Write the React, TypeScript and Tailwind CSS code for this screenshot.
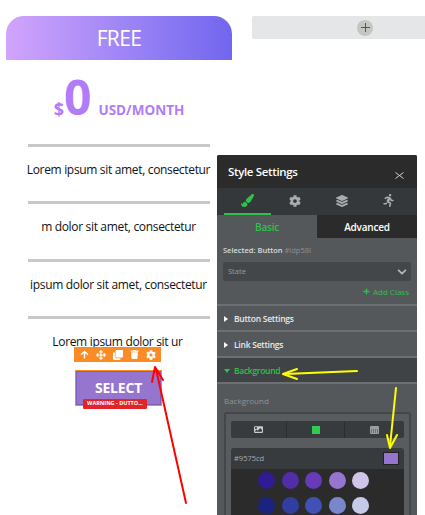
import { FaArrowUp, FaArrowsAlt, FaClone, FaTrash, FaCog, FaPaintBrush, FaLayerGroup, FaRunning, FaImage, FaPlus, FaChevronDown } from "react-icons/fa";

const sans = "font-['Open_Sans','Liberation_Sans',sans-serif]";

function Feature({ text }: { text: string }) {
  return (
    <div className="flex h-[57.4px] flex-col items-center">
      <div className="h-[3px] w-[182px] bg-[#c8c8c8]" />
      <div className="mt-[14px] w-[210px] whitespace-nowrap pr-[1px] text-center text-[12px] leading-[18px] tracking-[-0.33px] text-[#111]">{text}</div>
    </div>
  );
}

function Row({ label }: { label: string }) {
  return (
    <div className="flex h-[26px] items-center gap-[6px] border-b-2 border-[#6c7073] pl-[7px] pt-[2px] text-[8.5px] font-semibold tracking-[-0.25px] text-[#e8eaea]">
      <span className="h-0 w-0 border-y-[3px] border-l-[4px] border-y-transparent border-l-white" />
      {label}
    </div>
  );
}

const palette = [
  ["#311b92", "#512da8", "#673ab7", "#9575cd", "#d1c4e9"],
  ["#1a237e", "#303f9f", "#3f51b5", "#7986cb", "#c5cae9"],
];

export default function App() {
  return (
    <div className={`relative h-[515px] w-[425px] overflow-hidden bg-white ${sans}`}>
      <div className="flex items-start pt-[16px]">
        {/* Pricing column */}
        <div className="ml-[6px] w-[226px] shrink-0">
          <div className="flex h-[44px] items-center justify-center rounded-t-[18px] bg-gradient-to-r from-[#d2a4fc] to-[#7166ee] pt-[1px] text-[21px] tracking-[-0.6px] text-white">
            FREE
          </div>
          <div className="flex h-[84px] items-end justify-center pb-[24px] font-bold text-[#b07cf8]">
            <span className="text-[18px] leading-[22px]">$</span>
            <span className="mb-[-2px] text-[48px] leading-[50px]">0</span>
            <span className="ml-[7px] text-[13.5px] leading-[20px]">USD/MONTH</span>
          </div>
          <Feature text="Lorem ipsum sit amet, consectetur" />
          <Feature text="m dolor sit amet, consectetur" />
          <Feature text="ipsum dolor sit amet, consectetur" />
          <div className="flex flex-col items-center">
            <div className="h-[3px] w-[182px] bg-[#c8c8c8]" />
            <div className="mt-[14px] whitespace-nowrap pr-[3px] text-center text-[12px] leading-[18px] tracking-[-0.33px] text-[#111]">Lorem ipsum dolor sit ur</div>
            <div className="ml-[-3px] mt-[-4px] flex h-[15px] w-[87px] items-center justify-around bg-[#fb8b24] px-[2px] text-white">
              <FaArrowUp size={9} />
              <FaArrowsAlt size={10} />
              <FaClone size={10} />
              <FaTrash size={9} />
              <FaCog size={10} />
            </div>
            <div className="relative ml-[-1px] mt-[8px] flex h-[36px] w-[87px] justify-center border border-[#fb8b24] bg-[#9575cd] pt-[7px] text-[14px] font-bold leading-[20px] tracking-[-0.2px] text-white shadow-[inset_0_0_0_1px_#7e60b8]">
              SELECT
              <div className="absolute left-[7px] top-[28px] flex h-[10px] w-[64px] items-center justify-center rounded-[1px] bg-[#e02427] text-[5.5px] font-bold leading-none tracking-normal">
                WARNING - DUTTO...
              </div>
            </div>
          </div>
        </div>
        {/* Add row bar */}
        <div className="ml-[20px] flex h-[23px] w-[226px] shrink-0 items-center justify-center rounded-l-[2px] bg-[#e4e6e8]">
          <div className="flex h-[16px] w-[16px] items-center justify-center rounded-full bg-[#c4c6c2] text-[#50605c]">
            <svg width="9" height="9" viewBox="0 0 9 9" stroke="#4a5a56" strokeWidth="1"><path d="M4.5 0v9M0 4.5h9" /></svg>
          </div>
        </div>
      </div>

      {/* Floating style panel */}
      <div className="absolute left-[217px] top-[155px] h-[360px] w-[200px] overflow-hidden rounded-t-[2px] bg-[#54585b] text-white">
        <div className="flex h-[33px] items-center justify-between bg-[#2b2b2b] pl-[11px] pr-[13px] text-[11.5px] font-semibold tracking-[-0.35px]">
          <span>Style Settings</span>
          <svg width="9" height="7" viewBox="0 0 9 7" className="mt-[7px]" stroke="#cfcfcf" strokeWidth="1" fill="none"><path d="M.5.5l8 6M8.5.5l-8 6" /></svg>
        </div>
        <div className="flex h-[27px] bg-[#35383b] pl-[7px] text-[#a6acb0]">
          <div className="flex h-[27px] w-[47px] items-center justify-center border-b-2 border-[#2fc14a] text-[#2fc14a]">
            <FaPaintBrush size={13} />
          </div>
          <div className="flex h-[27px] w-[47px] items-center justify-center pb-[2px]"><FaCog size={12} /></div>
          <div className="flex h-[27px] w-[47px] items-center justify-center pb-[2px]"><FaLayerGroup size={12} /></div>
          <div className="flex h-[27px] w-[47px] items-center justify-center pb-[2px]"><FaRunning size={13} /></div>
        </div>
        <div className="flex h-[23px] text-[10px] font-semibold tracking-[-0.2px]">
          <div className="flex w-[100px] items-center justify-center pt-[1px] text-[#2fc14a]">Basic</div>
          <div className="flex flex-1 items-center justify-center bg-[#2b2b2b] pt-[1px]">Advanced</div>
        </div>
        <div className="flex h-[24px] items-center pl-[6px] pt-[1px] text-[7.5px] font-semibold text-[#d8dadb]">
          Selected: Button&nbsp;<span className="font-normal text-[#8c9093]">#idp58I</span>
        </div>
        <div className="mx-[6px] flex h-[19px] items-center justify-between rounded-[2px] bg-[#43474a] pl-[5px] pr-[4px] text-[7.5px] text-[#989c9e]">
          State
          <FaChevronDown size={10} className="text-[#b9bcbd]" />
        </div>
        <div className="flex h-[25px] items-center justify-end gap-[3px] border-b-2 border-[#6c7073] pb-[2px] pr-[8px] text-[8px] text-[#2fc14a]">
          <FaPlus size={7} />
          Add Class
        </div>
        <Row label="Button Settings" />
        <Row label="Link Settings" />
        <div className="flex h-[26px] items-center gap-[4px] border-b-2 border-[#6c7073] bg-[#404346] pl-[7px] pt-[2px] text-[8.5px] font-semibold tracking-[-0.3px] text-[#2fc14a]">
          <span className="h-0 w-0 border-x-[3px] border-t-[4px] border-x-transparent border-t-[#2fc14a]" />
          Background
        </div>
        <div className="flex h-[28px] items-center pl-[7px] pt-[6px] text-[8px] text-[#8f9395]">Background</div>
        <div className="ml-[7px] mr-[6px] h-[120px] rounded-[2px] border-2 border-[#43474a] bg-[#585c5f] px-[5px] pt-[7px]">
          <div className="flex h-[17px] overflow-hidden rounded-[2px] bg-[#373b3e]">
            <div className="flex w-[56px] items-center justify-center border-r border-[#2b2e30] text-[#c9cbcc]">
              <FaImage size={9} />
            </div>
            <div className="flex w-[58px] items-center justify-center border-r border-[#2b2e30]">
              <div className="h-[8px] w-[8px] bg-[#2ecc4f]" />
            </div>
            <div className="flex flex-1 items-center justify-center">
              <svg width="9" height="8" viewBox="0 0 9 8"><rect width="9" height="8" rx="1" fill="#9a9d9e" /><path d="M1 4h7M1 6h7" stroke="#44484a" strokeDasharray="1 1" /></svg>
            </div>
          </div>
          <div className="mt-[10px] flex h-[21px] items-center justify-between rounded-t-[3px] bg-[#373b3e] pl-[3px] pr-[5px] text-[7.5px] text-[#a8acae]">
            #9575cd
            <div className="h-[13px] w-[16px] border border-[#222] bg-[#9575cd]" />
          </div>
          <div className="flex h-[60px] flex-col gap-[8px] bg-[#2b2b2b] pr-[8px] pt-[3px]">
            {palette.map((row, i) => (
              <div key={i} className="flex justify-center gap-[6.5px]">
                {row.map((c) => (
                  <div key={c} className="h-[17px] w-[17px] rounded-full" style={{ backgroundColor: c }} />
                ))}
              </div>
            ))}
          </div>
        </div>
      </div>

      {/* Annotation arrows */}
      <svg className="absolute inset-0" width="425" height="515" fill="none" strokeLinecap="round">
        <path d="M186 503 156 369" stroke="#ff0000" strokeWidth="2" />
        <path d="M155 367 152 382M155 367 163 380" stroke="#ff0000" strokeWidth="2" />
        <path d="M357 371 285 374" stroke="#ffff00" strokeWidth="2" />
        <path d="M283 374 297 369M283 374 297 379" stroke="#ffff00" strokeWidth="2" />
        <path d="M396 388 390 446" stroke="#ffff00" strokeWidth="2" />
        <path d="M390 448 387 435M390 448 397 435" stroke="#ffff00" strokeWidth="2" />
      </svg>
    </div>
  );
}
